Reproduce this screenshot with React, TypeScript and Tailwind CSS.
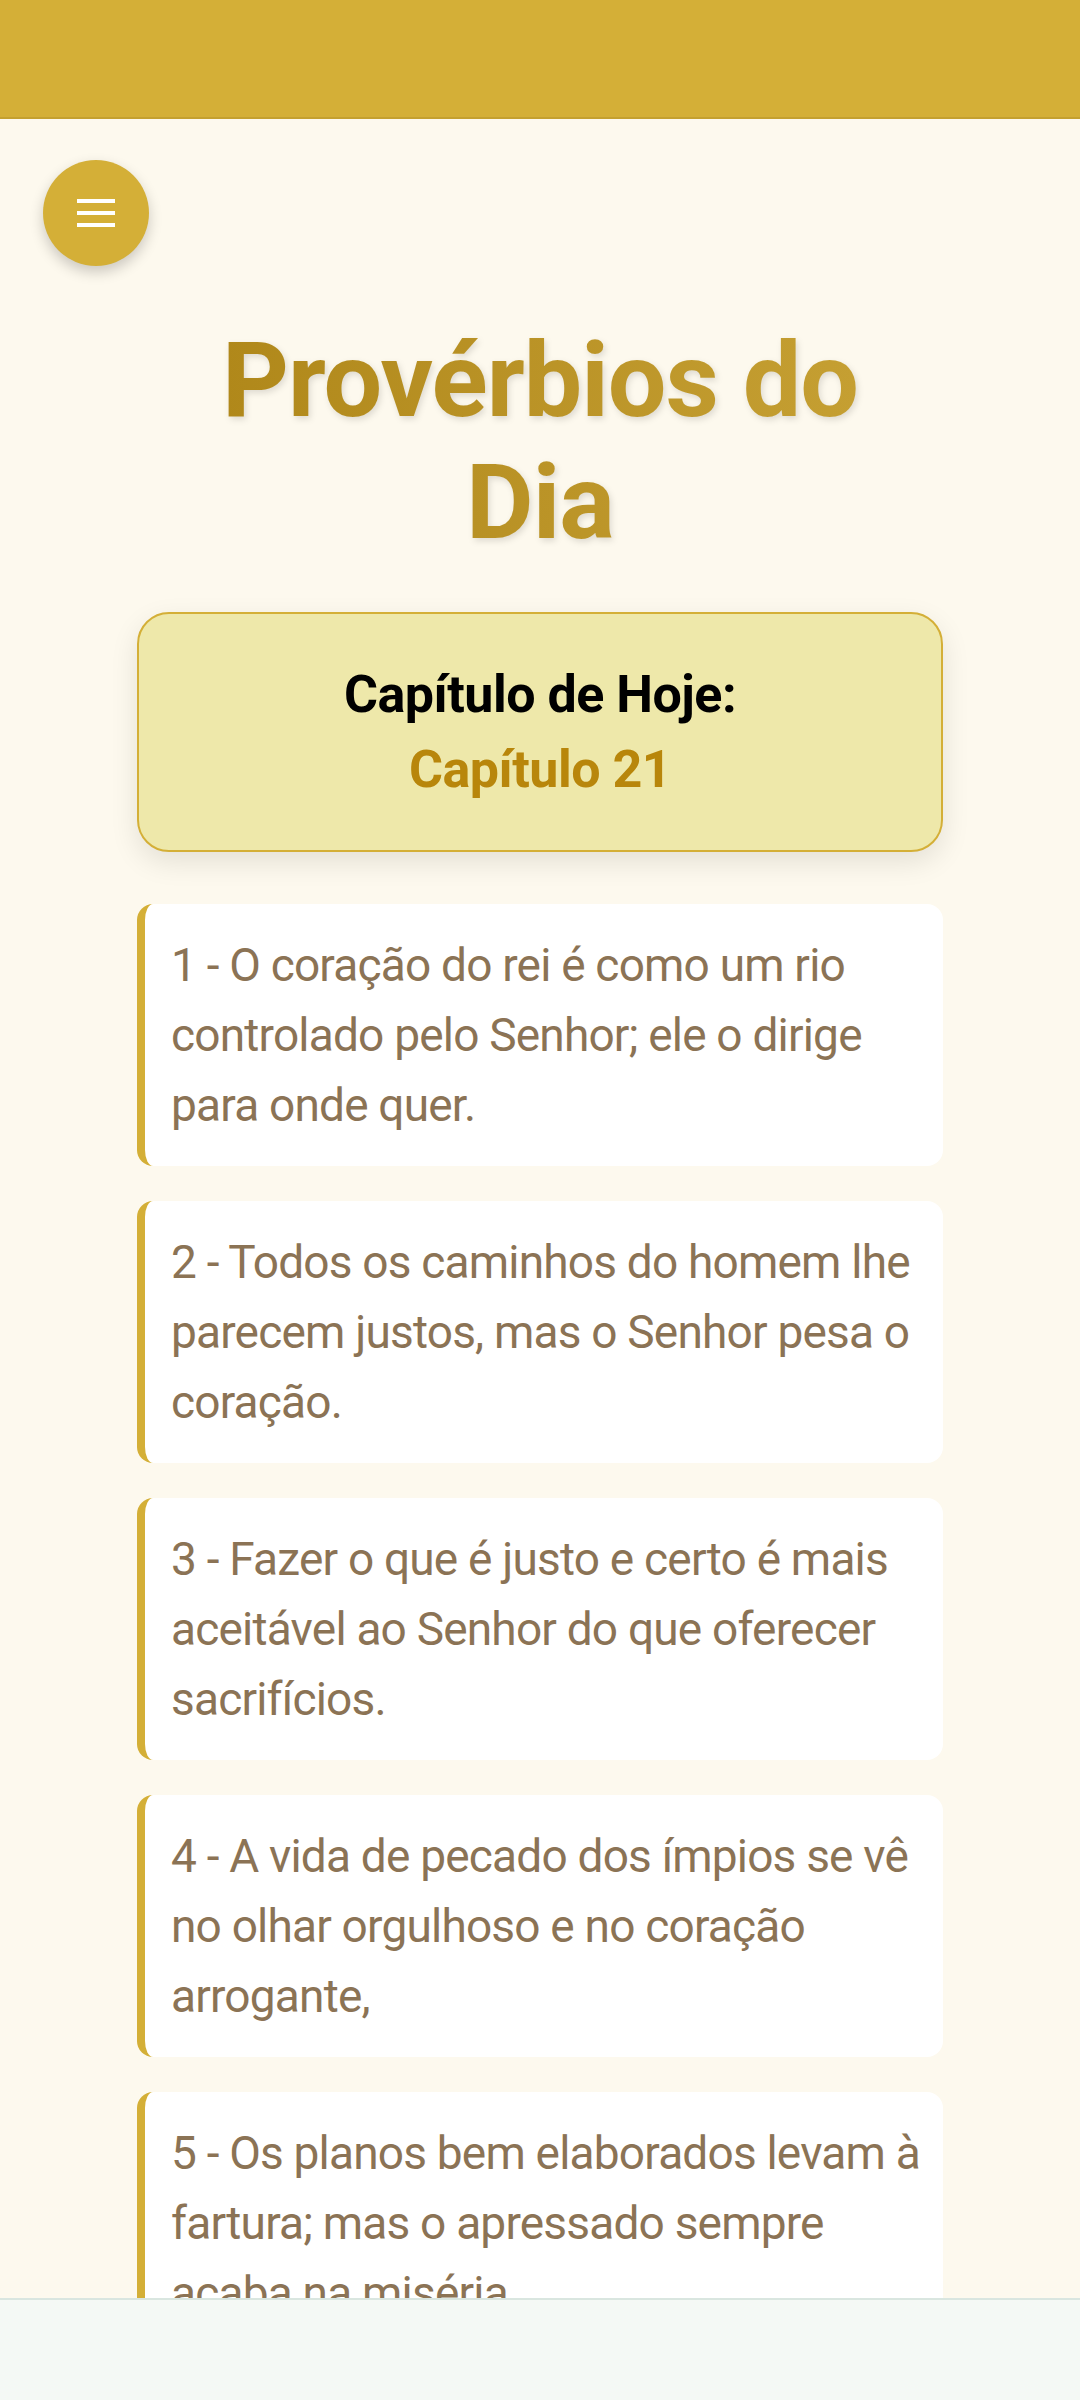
const verses = [
  "1 - O coração do rei é como um rio controlado pelo Senhor; ele o dirige para onde quer.",
  "2 - Todos os caminhos do homem lhe parecem justos, mas o Senhor pesa o coração.",
  "3 - Fazer o que é justo e certo é mais aceitável ao Senhor do que oferecer sacrifícios.",
  "4 - A vida de pecado dos ímpios se vê no olhar orgulhoso e no coração arrogante,",
  "5 - Os planos bem elaborados levam à fartura; mas o apressado sempre acaba na miséria.",
];

function MenuButton() {
  return (
    <button className="flex size-[106px] items-center justify-center rounded-full bg-[#D4AF37] shadow-[0_6px_14px_rgba(0,0,0,0.2)]">
      <svg width="38" height="36" viewBox="0 0 38 36" fill="white">
        <rect x="0" y="4" width="38" height="4" />
        <rect x="0" y="16" width="38" height="4" />
        <rect x="0" y="28" width="38" height="4" />
      </svg>
    </button>
  );
}

export default function App() {
  return (
    <div className="min-h-screen bg-[#FDF9EE] font-['Roboto',sans-serif]">
      {/* top bar */}
      <header className="h-[119px] border-b-2 border-[#C4A02F] bg-[#D4AF37]" />

      <main className="px-[43px] pt-[41px] pb-[120px]">
        <MenuButton />

        <h1 className="mx-auto mt-[54px] w-fit bg-gradient-to-r from-[#B0881A] to-[#C59F32] bg-clip-text text-center text-[104px] font-bold leading-[122px] tracking-[-1px] text-transparent drop-shadow-[2px_3px_3px_rgba(0,0,0,0.12)]">
          Provérbios do
          <br />
          Dia
        </h1>

        <div className="mx-[94px] mt-[48px] flex flex-col gap-[35px]">
          {/* chapter of the day */}
          <div className="mb-[17px] flex flex-col items-center gap-[14px] rounded-[32px] border-2 border-[#D4AF37] bg-[#EEE8AA] py-[50px] text-[52px] font-bold leading-[61px] tracking-[-0.5px] shadow-[0_10px_28px_rgba(0,0,0,0.1)]">
            <p className="text-black">Capítulo de Hoje:</p>
            <p className="text-[#B8860B]">Capítulo 21</p>
          </div>

          {verses.map((v) => (
            <div
              key={v}
              className="rounded-2xl border-l-8 border-[#D4AF37] bg-white py-[26px] pl-[26px] pr-[18px] text-[46px] leading-[70px] tracking-[-0.8px] text-[#8B7355]"
            >
              {v}
            </div>
          ))}
        </div>
      </main>

      {/* bottom strip */}
      <div className="fixed inset-x-0 bottom-0 h-[102px] border-t-2 border-[#D9E6E0] bg-[#F4F9F5]" />
    </div>
  );
}
